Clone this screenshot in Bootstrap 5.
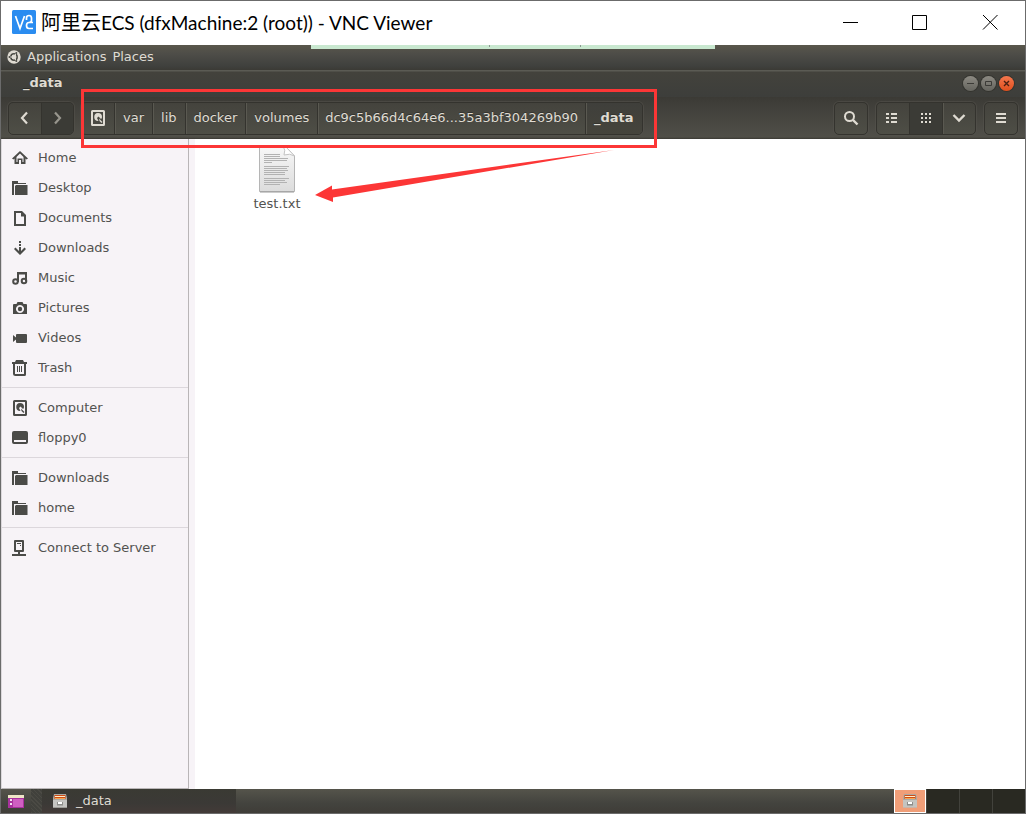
<!DOCTYPE html>
<html lang="en">
<head>
<meta charset="utf-8">
<meta name="viewport" content="width=device-width, initial-scale=1">
<title>阿里云ECS (dfxMachine:2 (root)) - VNC Viewer</title>
<link href="https://cdn.jsdelivr.net/npm/bootstrap@5.3.0/dist/css/bootstrap.min.css" rel="stylesheet">
<style>
body { font-family: "DejaVu Sans", sans-serif; font-size: 13px; line-height: 20px; color: #525250; background: #fff; }
button { font: inherit; color: inherit; background: none; border: 0; padding: 0; }
a { color: inherit; text-decoration: none; }
svg { display: block; flex: none; }
.vnc-window { border: 1px solid #6b6b6b; overflow: hidden; }
.vnc-title { height: 44px; color: #000; padding: 0 0 2px 11px; }
.vnc-title h1 { font: 19px/24px Lato, "Noto Sans CJK SC", sans-serif; margin: 0 0 0 5px; }
.vnc-title h1 span { font-size: 20px; }
.win-btn { width: 70px; height: 44px; display: flex; align-items: center; justify-content: center; }
.top-panel { height: 25px; background: linear-gradient(#59574b, #4e4d48 35%, #3f403d 85%, #3b3a35); color: #dfdbd2; padding: 0 6px 2px; gap: 6px; }
.vnc-handle { left: 310px; top: 0; width: 404px; height: 4px; background: #c9e8d0; }
.vnc-handle i { position: absolute; top: 0; width: 1px; height: 2px; background: #8b9990; }
.app-title { height: 27px; background: linear-gradient(#5b5b54 0 1px, #43423c 2px, #3d3e3b); color: #dfdbd2; padding: 0 11px 1px 22px; text-shadow: 0 -1px #2c2c28; }
.app-title h2 { font: bold 13px/20px "DejaVu Sans", sans-serif; margin: 0; }
.orbs { gap: 3px; }
.orb { width: 15px; height: 15px; border-radius: 50%; background: linear-gradient(#8c8a82, #65645e); box-shadow: 0 0 0 1px #34342f; display: flex; align-items: center; justify-content: center; }
.orb.shut { background: linear-gradient(#f4774e, #e04f1d); }
.tool-row { height: 42px; background: linear-gradient(#3b3a35, #403f3a 20%, #504f48 95%, #3a3934 100%); color: #dfdbd2; padding: 5px 7px 4px; }
.btn-set { height: 33px; display: flex; border: 1px solid #34332e; border-radius: 5px; box-shadow: 0 0 0 1px #55544d80; overflow: hidden; background: linear-gradient(#44433d, #4e4e46); }
.btn-set > * { display: flex; align-items: center; justify-content: center; padding-bottom: 1px; text-shadow: 0 -1px #35342f; }
.btn-set > * + * { border-left: 1px solid #34332e; box-shadow: inset 1px 0 #5a5951; }
.btn-set .sq { width: 32px; }
.btn-set .wide { width: 33px; }
.btn-set .pressed { background: #3b3b36; box-shadow: none; }
.crumbs { margin-left: 7px; }
.crumbs a { padding: 0 8px 2px; }
.crumbs a.long { padding: 0 7px 2px; }
.crumbs a.here { font-weight: bold; background: linear-gradient(#3f3f3b, #45443c); }
.mark-box { left: 80px; top: -8px; width: 576px; height: 59px; border: 3px solid #fc3636; pointer-events: none; }
.files { min-height: calc(100vh - 164px); }
.places { width: 188px; background: #f7f3f7; border: 1px solid #b9b5b7; border-left-color: #dcd8dc; padding-top: 4px; margin-top: -1px; }
.places a { display: flex; align-items: center; height: 30px; gap: 10px; padding-left: 10px; }
.places svg { fill: #4b4b48; }
.places hr { margin: 4px 0 5px; border: 0; height: 1px; background: #dcd7dc; opacity: 1; }
.strip { width: 6px; background: #f7f3f7; }
.doc { left: 54px; top: 7px; width: 56px; text-align: center; }
.canvas-area .doc svg { margin: 0 auto 1px; }
.red-arrow { left: 120px; top: 11px; }
.task-bar { height: 24px; background: linear-gradient(#55544b, #43433e 60%, #3f3d38); color: #dfdbd2; }
.start-btn { padding: 0 7px; }
.grip { width: 11px; background: repeating-linear-gradient(45deg, #4b4a44 0 1px, #41413c 1px 3px); }
.task { width: 194px; background: linear-gradient(#3a3a33, #3b3936 60%, #433b38); padding-left: 10px; gap: 8px; }
.desk { width: 33px; background: #292922; border-left: 1px solid #42423c; }
.desk.current { width: 32px; background: #f09e78; border: 1px solid #fff; }
</style>
</head>
<body>
<div class="vnc-window d-flex flex-column min-vh-100">
  <header class="vnc-title d-flex align-items-center">
    <svg width="24" height="24" viewBox="0 0 24 24"><rect width="24" height="24" rx="1.500" fill="#2a8cf0"/><path d="M3.500 6 8 18.500 12.500 6M14.500 10V8Q14.500 5.500 17 5.500T19.500 8V10.500Q19.500 12.500 17 12.500H21M17 12.500Q14.500 12.500 14.500 15.500T17 18.500H21" fill="none" stroke="#fff" stroke-width="1.700"/></svg>
    <h1 class="flex-grow-1 text-nowrap"><span>阿里云</span>ECS (dfxMachine:2 (root)) - VNC Viewer</h1>
    <button class="win-btn" aria-label="Minimize"><svg width="16" height="16" stroke="#000"><path d="M1 8.500H16"/></svg></button>
    <button class="win-btn" aria-label="Maximize"><svg width="16" height="16" fill="none" stroke="#000"><path d="M.500 1.500H14.500V15.500H.500z"/></svg></button>
    <button class="win-btn" aria-label="Close"><svg width="16" height="16" stroke="#000"><path d="M1 1 15.500 15.500M15.500 1 1 15.500"/></svg></button>
  </header>

  <nav class="top-panel position-relative d-flex align-items-center">
    <svg width="14" height="14" viewBox="0 0 14 14"><circle cx="7" cy="7" r="6.700" fill="#dfdbd2"/><circle cx="7" cy="7" r="3.200" fill="none" stroke="#4a4a44" stroke-width="1.500"/><g stroke="#dfdbd2"><path d="M7 7H1M7 7 10 1.800M7 7l3 5.200"/></g><g fill="#4a4a44"><circle cx="2.500" cy="7" r="1"/><circle cx="9.300" cy="3" r="1"/><circle cx="9.300" cy="11" r="1"/></g><circle cx="7" cy="7" r="2.200" fill="#dfdbd2"/></svg>
    <a href="#">Applications</a><a href="#">Places</a>
    <div class="vnc-handle position-absolute"><i style="left:178px"></i><i style="left:269px"></i></div>
  </nav>

  <div class="app-title d-flex align-items-center justify-content-between">
    <h2>_data</h2>
    <div class="orbs d-flex">
      <button class="orb" aria-label="Minimize window"><svg width="9" height="9" stroke="#3c3b37"><path d="M1 4.500H8"/></svg></button>
      <button class="orb" aria-label="Maximize window"><svg width="9" height="9" stroke="#3c3b37" fill="none"><path d="M1.500 2.500H7.500V6.500H1.500z"/></svg></button>
      <button class="orb shut" aria-label="Close window"><svg width="9" height="9" stroke="#4b2012" stroke-width="1.400"><path d="M2 2 7 7M7 2 2 7"/></svg></button>
    </div>
  </div>

  <div class="tool-row position-relative d-flex">
    <div class="btn-set">
      <button class="sq" aria-label="Back"><svg width="12" height="14" fill="none" stroke="#dfdbd2" stroke-width="2.200"><path d="M8 1.500 3 7 8 12.500"/></svg></button>
      <button class="sq pressed" aria-label="Forward"><svg width="12" height="14" fill="none" stroke="#97958d" stroke-width="2.200"><path d="M3 1.500 8 7 3 12.500"/></svg></button>
    </div>
    <nav class="btn-set crumbs">
      <a href="#" aria-label="File system"><svg width="16" height="16" fill="#dfdbd2"><use href="#drive"/></svg></a>
      <a href="#">var</a><a href="#">lib</a><a href="#">docker</a><a href="#">volumes</a><a href="#" class="long">dc9c5b66d4c64e6...35a3bf304269b90</a><a href="#" class="here">_data</a>
    </nav>
    <div class="btn-set ms-auto"><button class="sq" aria-label="Search"><svg width="16" height="16" fill="none" stroke="#dfdbd2"><circle cx="6.500" cy="6.500" r="4.500" stroke-width="2"/><path d="M10 10 14.500 14.500" stroke-width="2.400"/></svg></button></div>
    <div class="btn-set ms-2">
      <button class="sq" aria-label="List view"><svg width="14" height="12" fill="#dfdbd2"><path d="M0 1h3v2H0zM5 1h6v2H5zM0 5h3v2H0zM5 5h6v2H5zM0 9h3v2H0zM5 9h6v2H5z"/></svg></button>
      <button class="wide pressed" aria-label="Icon view"><svg width="12" height="12" fill="#dfdbd2"><path d="M1 1h2v2H1zM5 1h2v2H5zM9 1h2v2H9zM1 5h2v2H1zM5 5h2v2H5zM9 5h2v2H9zM1 9h2v2H1zM5 9h2v2H5zM9 9h2v2H9z"/></svg></button>
      <button class="wide" aria-label="View options"><svg width="14" height="12" fill="none" stroke="#dfdbd2" stroke-width="2.400"><path d="M1.500 3 7 8.500 12.500 3"/></svg></button>
    </div>
    <div class="btn-set ms-2"><button class="sq" aria-label="Menu"><svg width="12" height="12" fill="#dfdbd2"><path d="M1 1h10v2H1zM1 5h10v2H1zM1 9h10v2H1z"/></svg></button></div>
    <div class="mark-box position-absolute z-3"></div>
  </div>

  <svg class="d-none">
    <symbol id="folder" viewBox="0 0 16 16"><path d="M0 1H6V3H14V4H2V15H0z"/><path d="M4 5H15.500V15H3V6z"/></symbol>
    <symbol id="drive" viewBox="0 0 16 16"><path fill-rule="evenodd" d="M2.500 0h11Q15 0 15 1.500v13q0 1.500-1.500 1.500h-11Q1 16 1 14.500v-13Q1 0 2.500 0zM3 2v12h10V2z"/><path d="M8 3a4 4 0 0 1 4 4q0 1.500-1 2L8.500 6.500 7 8 8.500 11a4 4 0 0 1-.500-8zM9 8.500l3.500 3.500-1 1-2-2z"/></symbol>
    <symbol id="cabinet" viewBox="0 0 16 16"><path d="M2 1H14L15 5V14.500H1V5z" fill="#aaa9a5"/><path d="M2.500 2H13.500V6H2.500z" fill="#cf4b14"/><path d="M3 3H13V4H3z" fill="#fff2cd"/><path d="M3 5H13V6H3z" fill="#f9a54e"/><path d="M1 7H15V14.500H1z" fill="#c4c4c1"/><path d="M5 9H11V12.500H5z" fill="#8c8c89"/><path d="M6 9H10V11H6z" fill="#fff"/></symbol>
  </svg>

  <main class="files d-flex flex-grow-1">
    <nav class="places flex-shrink-0">
      <a href="#"><svg width="16" height="16"><path fill-rule="evenodd" d="M8 1 16 8.500 14.500 9.500 13.500 8.500V14H9V10H7V14H2.500V8.500L1.500 9.500 0 8.500zM8 3.500 4.500 7V12H5.500V8.500H10.500V12H11.500V7z"/></svg>Home</a>
      <a href="#"><svg width="16" height="16"><use href="#folder"/></svg>Desktop</a>
      <a href="#"><svg width="16" height="16"><path fill-rule="evenodd" d="M2 1H10L14 5V16H2zM4 3V14H12V6.500H9V3z"/></svg>Documents</a>
      <a href="#"><svg width="16" height="16"><path d="M7 1H9V3H7zM7 4H9V6H7zM7 7H9V11L12.500 7.500 14 9 8 15 2 9 3.500 7.500 7 11z"/></svg>Downloads</a>
      <a href="#"><svg width="16" height="16"><path d="M5 2H15V11H13V4.500H7V12H5z"/><g fill="none" stroke="#4b4b48" stroke-width="2"><circle cx="3.500" cy="11.500" r="2.300"/><circle cx="12" cy="11" r="2.300"/></g></svg>Music</a>
      <a href="#"><svg width="16" height="16"><path fill-rule="evenodd" d="M2 4H4.500L5.500 2H10.500L11.500 4H14Q15 4 15 5V14H1V5Q1 4 2 4zM8 5a4 4 0 1 0 .010 0z"/><circle cx="8" cy="9" r="2.200"/></svg>Pictures</a>
      <a href="#"><svg width="16" height="16"><path d="M1 5 4 7.500V5Q4 4 5 4H14Q15 4 15 5V12Q15 13 14 13H5Q4 13 4 12V9.500L1 12z"/></svg>Videos</a>
      <a href="#"><svg width="16" height="16"><path fill-rule="evenodd" d="M4 0H11L12 2H15V4H14V14.500Q14 16 12.500 16H3.500Q1 16 1 14V4H0V2H3zM3 4V14H12V4zM5 6H6V12H5zM7 6H8V12H7zM9 6H10V12H9z"/></svg>Trash</a>
      <hr>
      <a href="#"><svg width="16" height="16"><use href="#drive"/></svg>Computer</a>
      <a href="#"><svg width="16" height="16"><path fill-rule="evenodd" d="M2 1H14Q16 1 16 3V12Q16 14 14 14H2Q0 14 0 12V3Q0 1 2 1zM2 10V12H14V10z"/></svg>floppy0</a>
      <hr>
      <a href="#"><svg width="16" height="16"><use href="#folder"/></svg>Downloads</a>
      <a href="#"><svg width="16" height="16"><use href="#folder"/></svg>home</a>
      <hr>
      <a href="#"><svg width="16" height="16"><path fill-rule="evenodd" d="M3 0H11Q12 0 12 1V11Q12 12 11 12H8V14H14V16H0V14H6V12H3Q2 12 2 11V1Q2 0 3 0zM4 2V10H10V2zM5 3H9V4H5zM8 5H9V6H8z"/></svg>Connect to Server</a>
    </nav>
    <div class="strip flex-shrink-0"></div>
    <section class="canvas-area position-relative flex-grow-1">
      <figure class="doc position-absolute m-0">
        <svg width="38" height="47" viewBox="0 0 38 47"><defs><linearGradient id="paper" x2="0" y2="1"><stop stop-color="#f8f8f8"/><stop offset="1" stop-color="#dcdcdc"/></linearGradient></defs><path d="M1.500 0H27L36.500 10V45.500H1.500z" fill="url(#paper)" stroke="#b5b5b5"/><path d="M2 46H36" stroke="#999"/><path d="M25 0Q28 4 26 9 32 7 36.500 10L28 1z" fill="#fff" stroke="#c4c4c4"/><g stroke="#b2b2b2"><path d="M6 8.500H22M6 10.500H22M6 12.500H30M6 14.500H29M6 16.500H14M6 20.500H31M6 22.500H29M6 24.500H30M6 26.500H27M6 28.500H27M6 32.500H31M6 34.500H27M6 36.500H29M6 38.500H22"/></g></svg>
        <figcaption>test.txt</figcaption>
      </figure>
      <svg class="red-arrow position-absolute" width="300" height="54" viewBox="0 0 300 54"><path d="M0 45 17 35.500V39.500L299 0 18 47.500V52z" fill="#fc3636"/></svg>
    </section>
  </main>

  <footer class="task-bar d-flex">
    <button class="start-btn" aria-label="Show desktop"><svg width="16" height="15" viewBox="0 0 16 15"><path d="M0 1H16V14H0z" fill="#a8329d"/><path d="M5 5H15V13H5z" fill="#cf5fc2"/><path d="M0 1H16V4H0z" fill="#efe6c7"/><path d="M2 5H4V7H2zM2 9H4V11H2z" fill="#f5e3f2"/></svg></button>
    <div class="grip"></div>
    <button class="task d-flex align-items-center"><svg width="16" height="16"><use href="#cabinet"/></svg>_data</button>
    <div class="ms-auto d-flex">
      <button class="desk current d-flex align-items-center justify-content-center" aria-label="Workspace 1"><svg width="16" height="16"><use href="#cabinet"/></svg></button>
      <button class="desk" aria-label="Workspace 2"></button><button class="desk" aria-label="Workspace 3"></button><button class="desk" aria-label="Workspace 4"></button>
    </div>
  </footer>
</div>
<script src="https://cdn.jsdelivr.net/npm/bootstrap@5.3.0/dist/js/bootstrap.bundle.min.js"></script>
</body>
</html>
